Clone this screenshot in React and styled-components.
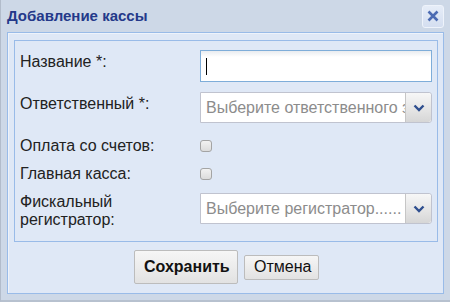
import styled, { createGlobalStyle } from "styled-components";

const GlobalStyle = createGlobalStyle`
	html, body {
		margin: 0;
		padding: 0;
		background: #cdd8e7;
	}
	body {
		font-family: "Liberation Sans", Arial, sans-serif;
	}
`;

const Window = styled.div`
	width: 450px;
	height: 302px;
	box-sizing: border-box;
	background: #cdd8e7;
	border-left: 1px solid #b2bccb;
	border-bottom: 2px solid #b7c1cf;
	display: flex;
	flex-direction: column;
	padding: 0 6px 6px 6px;
`;

const Header = styled.div`
	height: 32px;
	display: flex;
	align-items: center;
	justify-content: space-between;
	flex-shrink: 0;
`;

const Title = styled.div`
	font-size: 15px;
	font-weight: bold;
	color: #24398a;
	margin-top: -2px;
`;

const CloseTool = styled.button`
	width: 22px;
	height: 23px;
	margin: 0;
	padding: 0;
	border: 1px solid #eef3fb;
	border-radius: 3px;
	background: linear-gradient(#e6edf8, #d4def0);
	display: flex;
	align-items: center;
	justify-content: center;
	margin-top: 0px;
`;

const Body = styled.div`
	flex: 1;
	border: 1px solid #99bbe8;
	box-shadow: inset 1px 1px 0 #eef3fb;
	background: #dfe8f6;
	padding: 7px 5px 0 6px;
	display: flex;
	flex-direction: column;
`;

const FieldSet = styled.div`
	border: 1px solid #99bbe8;
	padding: 9px 5px 12px 5px;
	display: flex;
	flex-direction: column;
`;

const Row = styled.div`
	display: flex;
	align-items: flex-start;
	margin-top: ${(p) => p.$gap || 0}px;
`;

const Label = styled.div`
	width: 180px;
	flex-shrink: 0;
	font-size: 16px;
	line-height: 18px;
	color: #222;
	padding-top: ${(p) => p.$pad || 0}px;
`;

const TextBox = styled.div`
	width: 232px;
	height: 32px;
	box-sizing: border-box;
	border: 1px solid #7eadd9;
	background: linear-gradient(#e9ecf0, #ffffff 6px);
	display: flex;
	align-items: center;
	padding-left: 5px;
`;

const Caret = styled.span`
	width: 1px;
	height: 17px;
	background: #000;
`;

const Combo = styled.div`
	width: 232px;
	height: ${(p) => p.$h}px;
	box-sizing: border-box;
	display: flex;
	border: 1px solid #c0c3cf;
	border-radius: 0 3px 3px 0;
	background: #fff;
`;

const Placeholder = styled.div`
	flex: 1;
	min-width: 0;
	overflow: hidden;
	white-space: nowrap;
	font-size: 16px;
	color: #8c8c8c;
	padding-left: 5px;
	display: flex;
	align-items: center;
`;

const Trigger = styled.div`
	width: 25px;
	flex-shrink: 0;
	border-left: 1px solid #c6c6c6;
	border-radius: 0 3px 3px 0;
	background: linear-gradient(#f7f7f7, #e4e4e4 60%, #d6d6d6);
	display: flex;
	align-items: center;
	justify-content: center;
`;

const Check = styled.div`
	width: 12px;
	height: 12px;
	box-sizing: border-box;
	margin-top: 3px;
	border: 1px solid #a4a4a4;
	border-radius: 3px;
	background: linear-gradient(#f2f2f2, #dcdcdc);
`;

const Buttons = styled.div`
	display: flex;
	justify-content: center;
	align-items: center;
	gap: 6px;
	margin-top: 8px;
	padding-left: 1px;
`;

const Button = styled.button`
	font-family: "Liberation Sans", Arial, sans-serif;
	font-size: 16px;
	font-weight: ${(p) => (p.$primary ? "bold" : "normal")};
	color: #111;
	height: ${(p) => (p.$primary ? 34 : 25)}px;
	padding: 0 ${(p) => (p.$primary ? 9 : 9)}px;
	box-sizing: border-box;
	border: 1px solid #bcbcbc;
	border-radius: 2px;
	background: linear-gradient(#f6f6f6, #e2e2e2);
	width: ${(p) => (p.$primary ? 104 : 75)}px;
	margin: 0;
`;

const Chevron = () => (
	<svg width='12' height='8' viewBox='0 0 12 8'>
		<path d='M1.5 1.5 L6 6 L10.5 1.5' fill='none' stroke='#2f4f8f' strokeWidth='2.4' />
	</svg>
);

const CloseIcon = () => (
	<svg width='12' height='12' viewBox='0 0 12 12'>
		<path d='M1.5 1.5 L10.5 10.5 M10.5 1.5 L1.5 10.5' stroke='#4d6cb3' strokeWidth='2.6' />
	</svg>
);

const App = () => {
	return (
		<>
			<GlobalStyle />
			<Window>
				<Header>
					<Title>Добавление кассы</Title>
					<CloseTool>
						<CloseIcon />
					</CloseTool>
				</Header>
				<Body>
					<FieldSet>
						<Row>
							<Label $pad={3}>Название *:</Label>
							<TextBox>
								<Caret />
							</TextBox>
						</Row>
						<Row $gap={10}>
							<Label $pad={3}>Ответственный *:</Label>
							<Combo $h={31}>
								<Placeholder>Выберите ответственного за кассу......</Placeholder>
								<Trigger>
									<Chevron />
								</Trigger>
							</Combo>
						</Row>
						<Row $gap={14}>
							<Label>Оплата со счетов:</Label>
							<Check />
						</Row>
						<Row $gap={10}>
							<Label>Главная касса:</Label>
							<Check />
						</Row>
						<Row $gap={10}>
							<Label>
								Фискальный
								<br />
								регистратор:
							</Label>
							<Combo $h={31}>
								<Placeholder>Выберите регистратор......</Placeholder>
								<Trigger>
									<Chevron />
								</Trigger>
							</Combo>
						</Row>
					</FieldSet>
					<Buttons>
						<Button $primary>Сохранить</Button>
						<Button>Отмена</Button>
					</Buttons>
				</Body>
			</Window>
		</>
	);
};

export default App;
